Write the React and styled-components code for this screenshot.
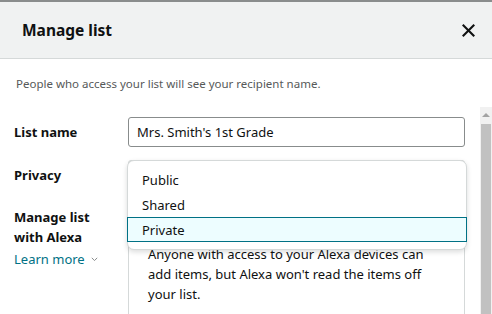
import React from "react";
import styled, { createGlobalStyle } from "styled-components";

const Global = createGlobalStyle`
  html, body {
    margin: 0;
    padding: 0;
    background: #fff;
    overflow: hidden;
  }
  body {
    font-family: "Noto Sans", "Open Sans", Arial, sans-serif;
    color: #0f1111;
  }
`;

const Modal = styled.div`
  width: 492px;
  height: 314px;
  display: flex;
  flex-direction: column;
  border-top: 2px solid #8a8d8d;
  box-sizing: border-box;
  overflow: hidden;
`;

const Header = styled.div`
  height: 56px;
  flex: none;
  background: #f0f2f2;
  border-bottom: 1px solid #d5d9d9;
  display: flex;
  align-items: center;
  justify-content: space-between;
  padding: 0 16px 0 22px;
`;

const Title = styled.h2`
  margin: 0;
  font-size: 15.5px;
  font-weight: 700;
  color: #0f1111;
`;

const CloseButton = styled.button`
  border: 0;
  background: none;
  padding: 0;
  width: 16px;
  height: 16px;
  display: flex;
  align-items: center;
  justify-content: center;
  cursor: pointer;
`;

const Note = styled.p`
  margin: 0;
  padding: 17px 16px 0;
  height: 31px;
  flex: none;
  font-size: 11.5px;
  line-height: 16px;
  color: #565959;
`;

const ScrollArea = styled.div`
  flex: 1;
  display: flex;
  min-height: 0;
`;

const Content = styled.div`
  flex: 1;
  padding: 10px 15px 0 14px;
  position: relative;
`;

const Scrollbar = styled.div`
  width: 12px;
  flex: none;
  background: #f1f1f1;
  display: flex;
  flex-direction: column;
  align-items: center;
`;

const ArrowUp = styled.div`
  width: 0;
  height: 0;
  margin-top: 6px;
  border-left: 4px solid transparent;
  border-right: 4px solid transparent;
  border-bottom: 4px solid #a3a3a3;
`;

const Thumb = styled.div`
  width: 10px;
  flex: 1;
  margin-top: 7px;
  background: #c1c1c1;
`;

const Row = styled.div`
  display: grid;
  grid-template-columns: 114px 1fr;
  align-items: ${(p) => (p.$top ? "start" : "center")};
  margin-bottom: ${(p) => p.$gap || 0}px;
`;

const Label = styled.div`
  font-size: 13px;
  font-weight: 700;
  line-height: 20px;
  color: #0f1111;
`;

const LearnMore = styled.a`
  display: flex;
  align-items: center;
  gap: 6px;
  margin-top: 2px;
  font-size: 13px;
  line-height: 20px;
  color: #007185;
  text-decoration: none;
`;

const Input = styled.div`
  height: 30px;
  box-sizing: border-box;
  border: 1px solid #888c8c;
  border-radius: 3px;
  padding: 0 8px;
  display: flex;
  align-items: center;
  font-size: 13px;
  color: #0f1111;
`;

const Select = styled(Input)`
  border-color: #d5d9d9;
  background: #f0f2f2;
`;

const InfoBox = styled.div`
  border: 1px solid #d5d9d9;
  border-bottom: 0;
  padding: 36px 19px 20px 19px;
  font-size: 13px;
  line-height: 20px;
  color: #0f1111;
  height: 140px;
`;

const Menu = styled.ul`
  position: absolute;
  left: 127px;
  top: 53px;
  width: 340px;
  box-sizing: border-box;
  margin: 0;
  padding: 6px 0 7px;
  list-style: none;
  background: #fff;
  border: 1px solid #d5d9d9;
  border-radius: 7px;
  box-shadow: 0 2px 5px rgba(15, 17, 17, 0.15);
`;

const Option = styled.li`
  height: 25px;
  box-sizing: border-box;
  display: flex;
  align-items: center;
  padding: 0 14px;
  font-size: 13px;
  color: #0f1111;
  background: ${(p) => (p.$active ? "#edfdff" : "transparent")};
  border: 1px solid ${(p) => (p.$active ? "#007185" : "transparent")};
  margin: 0 -1px;
`;

const options = ["Public", "Shared", "Private"];

export default function App() {
  return (
    <>
      <Global />
      <Modal>
        <Header>
          <Title>Manage list</Title>
          <CloseButton aria-label="Close">
            <svg width="13" height="13" viewBox="0 0 13 13">
              <path d="M1.5 1.5 L11.5 11.5 M11.5 1.5 L1.5 11.5" stroke="#0f1111" strokeWidth="2.1" strokeLinecap="square" />
            </svg>
          </CloseButton>
        </Header>
        <Note>People who access your list will see your recipient name.</Note>
        <ScrollArea>
          <Content>
            <Row $gap={13}>
              <Label>List name</Label>
              <Input>Mrs. Smith's 1st Grade</Input>
            </Row>
            <Row $gap={17}>
              <Label>Privacy</Label>
              <Select aria-label="Privacy: Private" />
            </Row>
            <Row $top>
              <div>
                <Label>
                  Manage list
                  <br />
                  with Alexa
                </Label>
                <LearnMore href="#">
                  Learn more
                  <svg width="7" height="5" viewBox="0 0 7 5">
                    <path d="M0.8 0.8 L3.5 3.6 L6.2 0.8" fill="none" stroke="#8a8d8d" strokeWidth="1" />
                  </svg>
                </LearnMore>
              </div>
              <InfoBox>
                Anyone with access to your Alexa devices can add items, but Alexa won't read the items off your list.
              </InfoBox>
            </Row>
            <Menu>
              {options.map((o) => (
                <Option key={o} $active={o === "Private"}>
                  {o}
                </Option>
              ))}
            </Menu>
          </Content>
          <Scrollbar>
            <ArrowUp />
            <Thumb />
          </Scrollbar>
        </ScrollArea>
      </Modal>
    </>
  );
}
